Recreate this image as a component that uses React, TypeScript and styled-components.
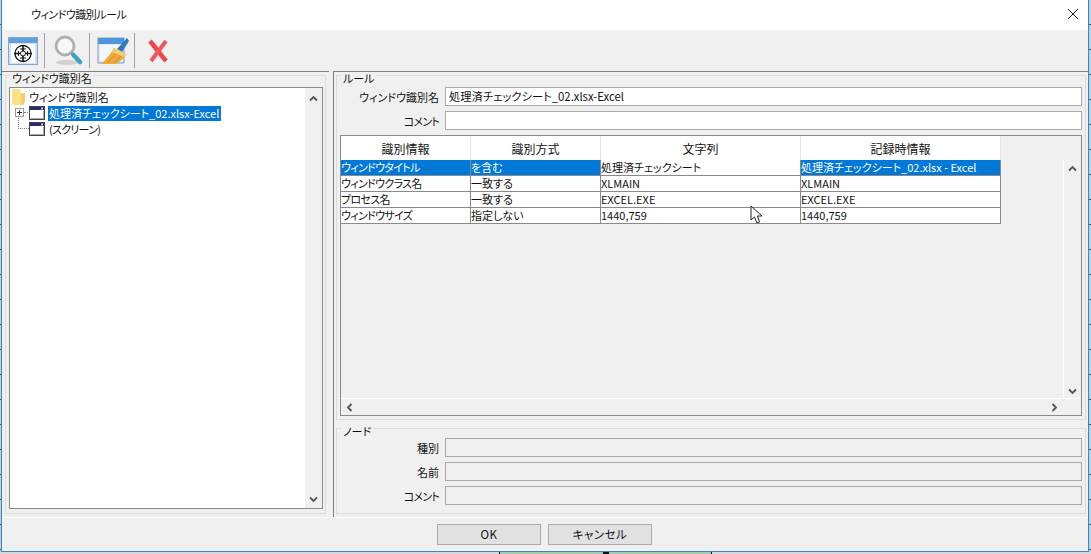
import React from "react";
import styled, { createGlobalStyle } from "styled-components";

const GlobalStyle = createGlobalStyle`
  html, body {
    margin: 0;
    padding: 0;
    height: 554px;
    overflow: hidden;
    background: #bcd6ec;
  }
  body {
    font-family: "Noto Sans CJK JP", "Noto Sans", sans-serif;
    font-size: 11px;
    color: #111;
    font-feature-settings: "palt";
  }
`;

const Desktop = styled.div`
  position: relative;
  width: 1091px;
  height: 554px;
  padding-left: 1px;
  box-sizing: border-box;
  background: repeating-linear-gradient(180deg, #b5d2ea 0 24px, #44586c 24px 25px);
`;

const Window = styled.div`
  width: 1088px;
  height: 552px;
  box-sizing: border-box;
  border-right: 1px solid #3f86b8;
  border-bottom: 1px solid #3f86b8;
  border-left: 1px solid #3f86b8;
  background: #f0f0f0;
  display: flex;
  flex-direction: column;
`;

const BottomStrip = styled.div`
  height: 2px;
  margin-left: -1px;
  background: #d9d9d9;
  display: flex;
`;

const GreenCell = styled.div`
  position: relative;
  width: 211px;
  margin-left: 499px;
  background: #a3cbb0;
  border-left: 1px solid #111;
  border-right: 1px solid #111;

  &::after {
    content: "";
    position: absolute;
    left: 103px;
    top: 0;
    width: 6px;
    height: 2px;
    background: #111;
  }
`;

const TitleBar = styled.div`
  height: 30px;
  flex: none;
  background: #fff;
  display: flex;
  align-items: center;
  justify-content: space-between;
  padding: 0 9px 2px 29px;
  box-sizing: border-box;
  font-size: 11px;
  letter-spacing: -0.5px;
`;

const CloseButton = styled.svg`
  width: 12px;
  height: 12px;
`;

const Toolbar = styled.div`
  height: 41px;
  flex: none;
  display: flex;
  align-items: center;
  padding-left: 4px;
  box-sizing: border-box;
`;

const ToolButton = styled.div`
  width: 33px;
  height: 32px;
  display: flex;
  align-items: center;
  justify-content: center;
`;

const ToolDivider = styled.div`
  width: 1px;
  height: 35px;
  margin: 0 6px 0 5px;
  background: #a0a0a0;
`;

const Body = styled.div`
  flex: 1;
  display: flex;
  min-height: 0;
`;

const LeftPane = styled.div`
  width: 327px;
  flex: none;
  padding: 0 3px 3px 3px;
  box-sizing: border-box;
  display: flex;
  border-top: 1px solid #808080;
`;

const Group = styled.fieldset`
  flex: 1;
  margin: 0;
  padding: 0;
  box-sizing: border-box;
  border: 1px solid #dcdcdc;
  display: flex;
  flex-direction: column;
  min-width: 0;
`;

const GroupTitle = styled.legend`
  padding: 0 2px;
  margin-left: 4px;
  font-size: 11px;
  height: 7px;
  line-height: 13px;
`;

const TreeBox = styled.div`
  flex: 1;
  margin: 8px 2px 4px 3px;
  border: 1px solid #8a8a8a;
  background: #fff;
  display: flex;
  min-height: 0;
`;

const TreeList = styled.div`
  flex: 1;
  padding-top: 1px;
`;

const TreeRow = styled.div<{ $indent?: number }>`
  height: 16px;
  display: flex;
  align-items: center;
  padding-left: ${({ $indent }) => $indent ?? 0}px;
  position: relative;
`;

const TreeLabel = styled.span<{ $selected?: boolean; $tight?: boolean }>`
  margin-left: 3px;
  padding: 0 2px 0 1px;
  height: 15px;
  line-height: 15px;
  font-size: 11px;
  letter-spacing: ${({ $tight }) => ($tight ? "-0.7px" : "0")};
  background: ${({ $selected }) => ($selected ? "#0078d7" : "transparent")};
  color: ${({ $selected }) => ($selected ? "#fff" : "#111")};
`;

const TreeGuide = styled.span`
  position: absolute;
  left: 8px;
  top: -5px;
  width: 10px;
  height: 12px;
  border-left: 1px dotted #777;
  border-bottom: 1px dotted #777;
`;

const Expander = styled.span`
  position: absolute;
  left: 5px;
  top: 3px;
  width: 7px;
  height: 7px;
  border: 1px solid #999;
  background: #fff;
  display: flex;
  align-items: center;
  justify-content: center;

  &::after {
    content: "";
    position: absolute;
    left: 8px;
    top: 3px;
    width: 6px;
    border-top: 1px dotted #777;
  }
`;

const ScrollTrackV = styled.div`
  width: 17px;
  flex: none;
  background: #f0f0f0;
  display: flex;
  flex-direction: column;
  justify-content: space-between;
  align-items: center;
  padding: 6px 0 4px;
  box-sizing: border-box;
`;

const Splitter = styled.div`
  width: 4px;
  flex: none;
`;

const RightPane = styled.div`
  flex: 1;
  min-width: 0;
  display: flex;
  flex-direction: column;
  padding: 0 2px 0 2px;
  box-sizing: border-box;
  border-top: 1px solid #808080;
  border-left: 1px solid #808080;
`;

const RuleGroup = styled(Group)`
  flex: none;
  height: 348px;
  display: block;
  padding-top: 8px;
`;

const NodeGroup = styled(Group)`
  flex: none;
  margin-top: 5px;
  height: 89px;
  display: block;
  padding-top: 6px;
`;

const FormRow = styled.div`
  display: flex;
  align-items: center;
  height: 19px;
  margin-bottom: 5px;
  padding-right: 3px;
`;

const FormLabel = styled.div<{ $tight?: boolean }>`
  width: 108px;
  flex: none;
  text-align: right;
  padding-right: 6px;
  font-size: 11px;
  letter-spacing: ${({ $tight }) => ($tight ? "-0.75px" : "0")};
  box-sizing: border-box;
`;

const FormInput = styled.div<{ $disabled?: boolean }>`
  flex: 1;
  height: 19px;
  box-sizing: border-box;
  border: 1px solid #a9a9a9;
  background: ${({ $disabled }) => ($disabled ? "#f0f0f0" : "#fff")};
  padding-left: 3px;
  font-size: 11.3px;
  line-height: 17px;
`;

const GridFrame = styled.div`
  height: 281px;
  margin: 0 3px;
  border: 1px solid #8a8a8a;
  box-sizing: border-box;
  display: flex;
  flex-direction: column;
`;

const GridMain = styled.div`
  flex: 1;
  display: flex;
  min-height: 0;
`;

const GridArea = styled.div`
  flex: 1;
  min-width: 0;
`;

const HeaderRow = styled.div`
  display: flex;
  height: 24px;
`;

const HeaderCell = styled.div<{ $w: number }>`
  width: ${({ $w }) => $w}px;
  flex: none;
  box-sizing: border-box;
  background: #fff;
  border-right: 1px solid #e4e4e4;
  text-align: center;
  font-size: 12px;
  line-height: 25px;
`;

const DataRow = styled.div`
  display: flex;
  height: 16px;
`;

const DataCell = styled.div<{ $w: number; $selected?: boolean; $tight?: boolean }>`
  width: ${({ $w }) => $w}px;
  flex: none;
  box-sizing: border-box;
  border-right: 1px solid #8a8a8a;
  border-bottom: 1px solid #8a8a8a;
  background: ${({ $selected }) => ($selected ? "#0078d7" : "#fff")};
  color: ${({ $selected }) => ($selected ? "#fff" : "#111")};
  font-size: 11px;
  letter-spacing: ${({ $tight }) => ($tight ? "-0.7px" : "0")};
  line-height: 15px;
  white-space: nowrap;
  overflow: hidden;
`;

const GridScrollV = styled(ScrollTrackV)`
  width: 18px;
  margin-top: 24px;
  padding: 4px 0 2px;
  border-left: 1px solid #fff;
`;

const ScrollTrackH = styled.div`
  height: 17px;
  flex: none;
  box-sizing: border-box;
  border-top: 1px solid #fff;
  display: flex;
  align-items: center;
  justify-content: space-between;
  padding: 0 22px 0 4px;
`;

const DialogFooter = styled.div`
  height: 34px;
  flex: none;
  border-top: 1px solid #fff;
  display: flex;
  justify-content: flex-start;
  align-items: flex-start;
  gap: 7px;
  padding: 6px 0 0 435px;
  box-sizing: border-box;
`;

const FooterButton = styled.div`
  width: 104px;
  height: 21px;
  box-sizing: border-box;
  border: 1px solid #a9a9a9;
  background: #e1e1e1;
  text-align: center;
  font-size: 11.5px;
  line-height: 19px;
  letter-spacing: 0.5px;
`;

const Cursor = styled.svg`
  position: absolute;
  left: 750px;
  top: 205px;
  width: 15px;
  height: 20px;
`;

const Chevron = ({ dir }: { dir: "up" | "down" | "left" | "right" }) => {
  const rot = { up: 0, right: 90, down: 180, left: 270 }[dir];
  return (
    <svg width="9" height="9" viewBox="0 0 9 9" style={{ transform: `rotate(${rot}deg)` }}>
      <path d="M1 6.5 L4.5 3 L8 6.5" fill="none" stroke="#555" strokeWidth="1.8" />
    </svg>
  );
};

const PlusMark = () => (
  <svg width="7" height="7" viewBox="0 0 7 7">
    <path d="M1 3.5 H6 M3.5 1 V6" stroke="#333" strokeWidth="1" />
  </svg>
);

const WindowIcon = () => (
  <svg width="16" height="14" viewBox="0 0 16 14">
    <rect x="0.5" y="0.5" width="15" height="13" fill="#fff" stroke="#444" />
    <rect x="1" y="1" width="14" height="3" fill="#2a2a6a" />
    <rect x="12" y="1.5" width="2" height="2" fill="#ccc" />
    <path d="M1.5 12.5 H14.5 V5" fill="none" stroke="#a5a5a5" />
  </svg>
);

const FolderIcon = () => (
  <svg width="13" height="17" viewBox="0 0 13 17" style={{ marginTop: -1 }}>
    <path d="M0 1 H8 L9 5 H13 V14 L11 17 H0 Z" fill="#fde08a" />
    <path d="M9 5 H13 V14 L11 17 H9 Z" fill="#f6cd66" />
  </svg>
);

const CaptureIcon = () => (
  <svg width="30" height="28" viewBox="0 0 30 28">
    <rect x="0.5" y="0.5" width="29" height="27" fill="#cfe2f5" stroke="#78a9d8" />
    <rect x="1" y="1" width="28" height="5" fill="#62a0dc" />
    <rect x="3" y="7" width="24" height="19" fill="#fff" />
    <circle cx="15" cy="16.5" r="8" fill="none" stroke="#111" strokeWidth="1.3" />
    <circle cx="15" cy="16.5" r="2.5" fill="none" stroke="#111" />
    <path d="M15 8 V14 M15 19 V25 M6 16.5 H12.5 M17.5 16.5 H24" stroke="#111" strokeWidth="1.5" />
    <path d="M12 12 H18 M12 21 H18 M10.5 14 V19 M19.5 14 V19" stroke="#111" />
  </svg>
);

const SearchIcon = () => (
  <svg width="30" height="31" viewBox="0 0 30 31">
    <ellipse cx="14" cy="27.5" rx="11" ry="2.5" fill="#cfcfcf" />
    <circle cx="12" cy="11" r="9" fill="#f8f8f8" stroke="#b0b0b0" strokeWidth="2.8" />
    <path d="M18.5 18 L20.5 20" stroke="#8a8a8a" strokeWidth="2.5" />
    <path d="M20.5 20 L27 27" stroke="#3f9fc4" strokeWidth="4.5" strokeLinecap="round" />
  </svg>
);

const BrushIcon = () => (
  <svg width="32" height="27" viewBox="0 0 32 27">
    <rect x="1" y="1" width="26" height="25" fill="#dfe9f3" stroke="#7d9fc2" />
    <rect x="1" y="1" width="26" height="6" fill="#4f97d8" />
    <rect x="3" y="8" width="22" height="16" fill="#f4f7fa" />
    <path d="M20 12 L30 1 L32 4 L25 15 Z" fill="#2f78bc" />
    <path d="M17 11 L29 17 Q26 24 18 27 H4 Q11 21 17 11 Z" fill="#efa93a" />
    <path d="M17 11 L29 17 L27 20 L15 15 Z" fill="#f7cb74" />
    <path d="M10 26 Q15 22 19 17 M17 26 Q21 23 24 19" fill="none" stroke="#cf8c2a" />
  </svg>
);

const DeleteIcon = () => (
  <svg width="22" height="24" viewBox="0 0 22 24">
    <path d="M3 2 L19 22" stroke="#e8484c" strokeWidth="4.5" />
    <path d="M19 2 L4 22" stroke="#ee5a5c" strokeWidth="4" />
  </svg>
);

const widths = [130, 130, 200, 200];
const headers = ["識別情報", "識別方式", "文字列", "記録時情報"];
const rows = [
  ["ウィンドウタイトル", "を含む", "処理済チェックシート", "処理済チェックシート_02.xlsx - Excel"],
  ["ウィンドウクラス名", "一致する", "XLMAIN", "XLMAIN"],
  ["プロセス名", "一致する", "EXCEL.EXE", "EXCEL.EXE"],
  ["ウィンドウサイズ", "指定しない", "1440,759", "1440,759"],
];

export default function App() {
  return (
    <Desktop>
      <GlobalStyle />
      <Window>
        <TitleBar>
          <span>ウィンドウ識別ルール</span>
          <CloseButton viewBox="0 0 12 12">
            <path d="M1 1 L11 11 M11 1 L1 11" stroke="#222" strokeWidth="1" />
          </CloseButton>
        </TitleBar>
        <Toolbar>
          <ToolButton><CaptureIcon /></ToolButton>
          <ToolDivider />
          <ToolButton><SearchIcon /></ToolButton>
          <ToolDivider />
          <ToolButton><BrushIcon /></ToolButton>
          <ToolDivider />
          <ToolButton><DeleteIcon /></ToolButton>
        </Toolbar>
        <Body>
          <LeftPane>
            <Group>
              <GroupTitle>ウィンドウ識別名</GroupTitle>
              <TreeBox>
                <TreeList>
                  <TreeRow $indent={2}>
                    <FolderIcon />
                    <TreeLabel>ウィンドウ識別名</TreeLabel>
                  </TreeRow>
                  <TreeRow $indent={19}>
                    <Expander><PlusMark /></Expander>
                    <WindowIcon />
                    <TreeLabel $selected>処理済チェックシート_02.xlsx-Excel</TreeLabel>
                  </TreeRow>
                  <TreeRow $indent={19}>
                    <TreeGuide />
                    <WindowIcon />
                    <TreeLabel $tight>(スクリーン)</TreeLabel>
                  </TreeRow>
                </TreeList>
                <ScrollTrackV>
                  <Chevron dir="up" />
                  <Chevron dir="down" />
                </ScrollTrackV>
              </TreeBox>
            </Group>
          </LeftPane>
          <Splitter />
          <RightPane>
            <RuleGroup>
              <GroupTitle>ルール</GroupTitle>
              <FormRow>
                <FormLabel>ウィンドウ識別名</FormLabel>
                <FormInput>処理済チェックシート_02.xlsx-Excel</FormInput>
              </FormRow>
              <FormRow>
                <FormLabel $tight>コメント</FormLabel>
                <FormInput />
              </FormRow>
              <GridFrame>
                <GridMain>
                  <GridArea>
                    <HeaderRow>
                      {headers.map((h, i) => (
                        <HeaderCell key={h} $w={widths[i]}>{h}</HeaderCell>
                      ))}
                    </HeaderRow>
                    {rows.map((row, r) => (
                      <DataRow key={row[0]}>
                        {row.map((c, i) => (
                          <DataCell key={i} $w={widths[i]} $tight={i === 0} $selected={r === 0 && i !== 2}>{c}</DataCell>
                        ))}
                      </DataRow>
                    ))}
                  </GridArea>
                  <GridScrollV>
                    <Chevron dir="up" />
                    <Chevron dir="down" />
                  </GridScrollV>
                </GridMain>
                <ScrollTrackH>
                  <Chevron dir="left" />
                  <Chevron dir="right" />
                </ScrollTrackH>
              </GridFrame>
            </RuleGroup>
            <NodeGroup>
              <GroupTitle>ノード</GroupTitle>
              <FormRow>
                <FormLabel>種別</FormLabel>
                <FormInput $disabled />
              </FormRow>
              <FormRow>
                <FormLabel>名前</FormLabel>
                <FormInput $disabled />
              </FormRow>
              <FormRow>
                <FormLabel $tight>コメント</FormLabel>
                <FormInput $disabled />
              </FormRow>
            </NodeGroup>
          </RightPane>
        </Body>
        <DialogFooter>
          <FooterButton>OK</FooterButton>
          <FooterButton>キャンセル</FooterButton>
        </DialogFooter>
      </Window>
      <BottomStrip>
        <GreenCell />
      </BottomStrip>
      <Cursor viewBox="0 0 15 20">
        <path d="M1 1 V15 L4.5 12 L7 18 L9.5 17 L7.5 11 H12 Z" fill="#fff" stroke="#222" strokeWidth="1" />
      </Cursor>
    </Desktop>
  );
}
